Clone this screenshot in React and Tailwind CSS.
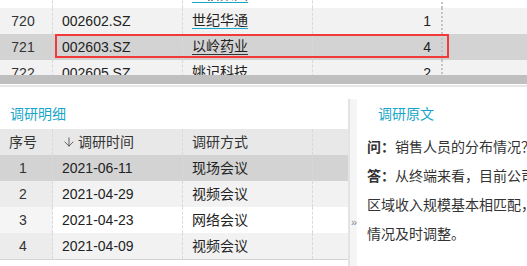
import React from 'react';
import { ArrowDown } from 'lucide-react';

const FONT = "font-['Liberation_Sans','Noto_Sans_CJK_SC',sans-serif]";

const stocks = [
  { no: 719, code: '002601.SZ', name: '龙佰集团', count: 3, bg: 'bg-white' },
  { no: 720, code: '002602.SZ', name: '世纪华通', count: 1, bg: 'bg-[#f2f2f2]' },
  { no: 721, code: '002603.SZ', name: '以岭药业', count: 4, bg: 'bg-[#d3d3d3]', active: true },
  { no: 722, code: '002605.SZ', name: '姚记科技', count: 2, bg: 'bg-[#f2f2f2]' },
];

const surveys = [
  { no: 1, date: '2021-06-11', type: '现场会议', bg: 'bg-[#d3d3d3]', idx: 'bg-[#d3d3d3]' },
  { no: 2, date: '2021-04-29', type: '视频会议', bg: 'bg-[#f2f2f2]', idx: 'bg-[#ececec]' },
  { no: 3, date: '2021-04-23', type: '网络会议', bg: 'bg-white', idx: 'bg-[#f5f5f5]' },
  { no: 4, date: '2021-04-09', type: '视频会议', bg: 'bg-[#f2f2f2]', idx: 'bg-[#ececec]' },
];

const cell = 'h-full flex items-center border-r border-dashed border-[#d9d9d9]';

export default function App() {
  return (
    <div className={`w-[527px] h-[266px] overflow-hidden bg-white text-[14px] text-[#222] ${FONT}`}>
      {/* Stock list (scrolled) */}
      <div className="relative h-[75px] overflow-hidden">
        <div className="mt-[-18px]">
          {stocks.map(s => (
            <div key={s.no} className={`flex h-[26px] ${s.bg}`}>
              <div className={`${cell} w-[53px] justify-center pr-[6px] text-[#333]`}>{s.no}</div>
              <div className={`${cell} w-[130px] pl-[9px]`}>{s.code}</div>
              <div className={`${cell} w-[130px] pl-[9px]`}>
                <span className={`inline-block leading-[15px] border-b ${s.active ? 'border-[#333]' : 'border-[#17a6c9]'}`}>{s.name}</span>
              </div>
              <div className="h-full w-[130px] flex items-center justify-end pr-[10px] border-r-2 border-dotted border-[#c4c4c4]">{s.count}</div>
              <div className="flex-1" />
            </div>
          ))}
        </div>
        {/* selected row outline */}
        <div className="absolute left-[55px] top-[34px] w-[394px] h-[24px] border-2 border-[#f23a3a]" />
      </div>
      <div className="h-[9px] bg-[#bfbfbf]" />
      <div className="h-[1px] bg-white" />
      <div className="h-[2px] bg-[#e6e6e6]" />

      {/* Lower area */}
      <div className="flex h-[179px]">
        {/* Survey list */}
        <div className="w-[348px] flex flex-col">
          <div className="h-[42px] pt-[17px] pl-[10px] leading-[20px] text-[#17a6c9]">调研明细</div>
          <div className="flex h-[26px] bg-[#e8e8e8] text-[#333]">
            <div className={`${cell} w-[53px] justify-center pr-[6px]`}>序号</div>
            <div className={`${cell} w-[130px] pl-[9px]`}>
              <ArrowDown size={14} strokeWidth={1.4} className="mr-[2px] text-[#444]" />
              调研时间
            </div>
            <div className={`${cell} w-[130px] pl-[9px]`}>调研方式</div>
            <div className="flex-1" />
          </div>
          {surveys.map(r => (
            <div key={r.no} className={`flex h-[26px] ${r.bg}`}>
              <div className={`${cell} w-[53px] justify-center pr-[6px] text-[#333] ${r.idx}`}>{r.no}</div>
              <div className={`${cell} w-[130px] pl-[9px]`}>{r.date}</div>
              <div className={`${cell} w-[130px] pl-[9px]`}>{r.type}</div>
              <div className="flex-1" />
            </div>
          ))}
          <div className="h-[1px] bg-[#d4d4d4]" />
        </div>

        {/* Collapse handle */}
        <div className="mt-[12px] w-[9px] border-l-2 border-[#e3e3e3] bg-[#f5f5f5] flex flex-col">
          <div className="mt-[116px] h-[14px] flex items-center text-[11px] leading-[12px] text-[#888] pl-[1px]">»</div>
        </div>

        {/* Original text */}
        <div className="flex-1 pl-[10px] whitespace-nowrap overflow-hidden text-[#333]">
          <div className="pt-[17px] pl-[11px] leading-[20px] text-[#17a6c9]">调研原文</div>
          <div className="mt-[9px] leading-[29px]">
            <div><span className="font-bold">问：</span>销售人员的分布情况？</div>
            <div><span className="font-bold">答：</span>从终端来看，目前公司销售人员的分布与各</div>
            <div>区域收入规模基本相匹配，公司会根据市场</div>
            <div>情况及时调整。</div>
          </div>
        </div>
      </div>
    </div>
  );
}
